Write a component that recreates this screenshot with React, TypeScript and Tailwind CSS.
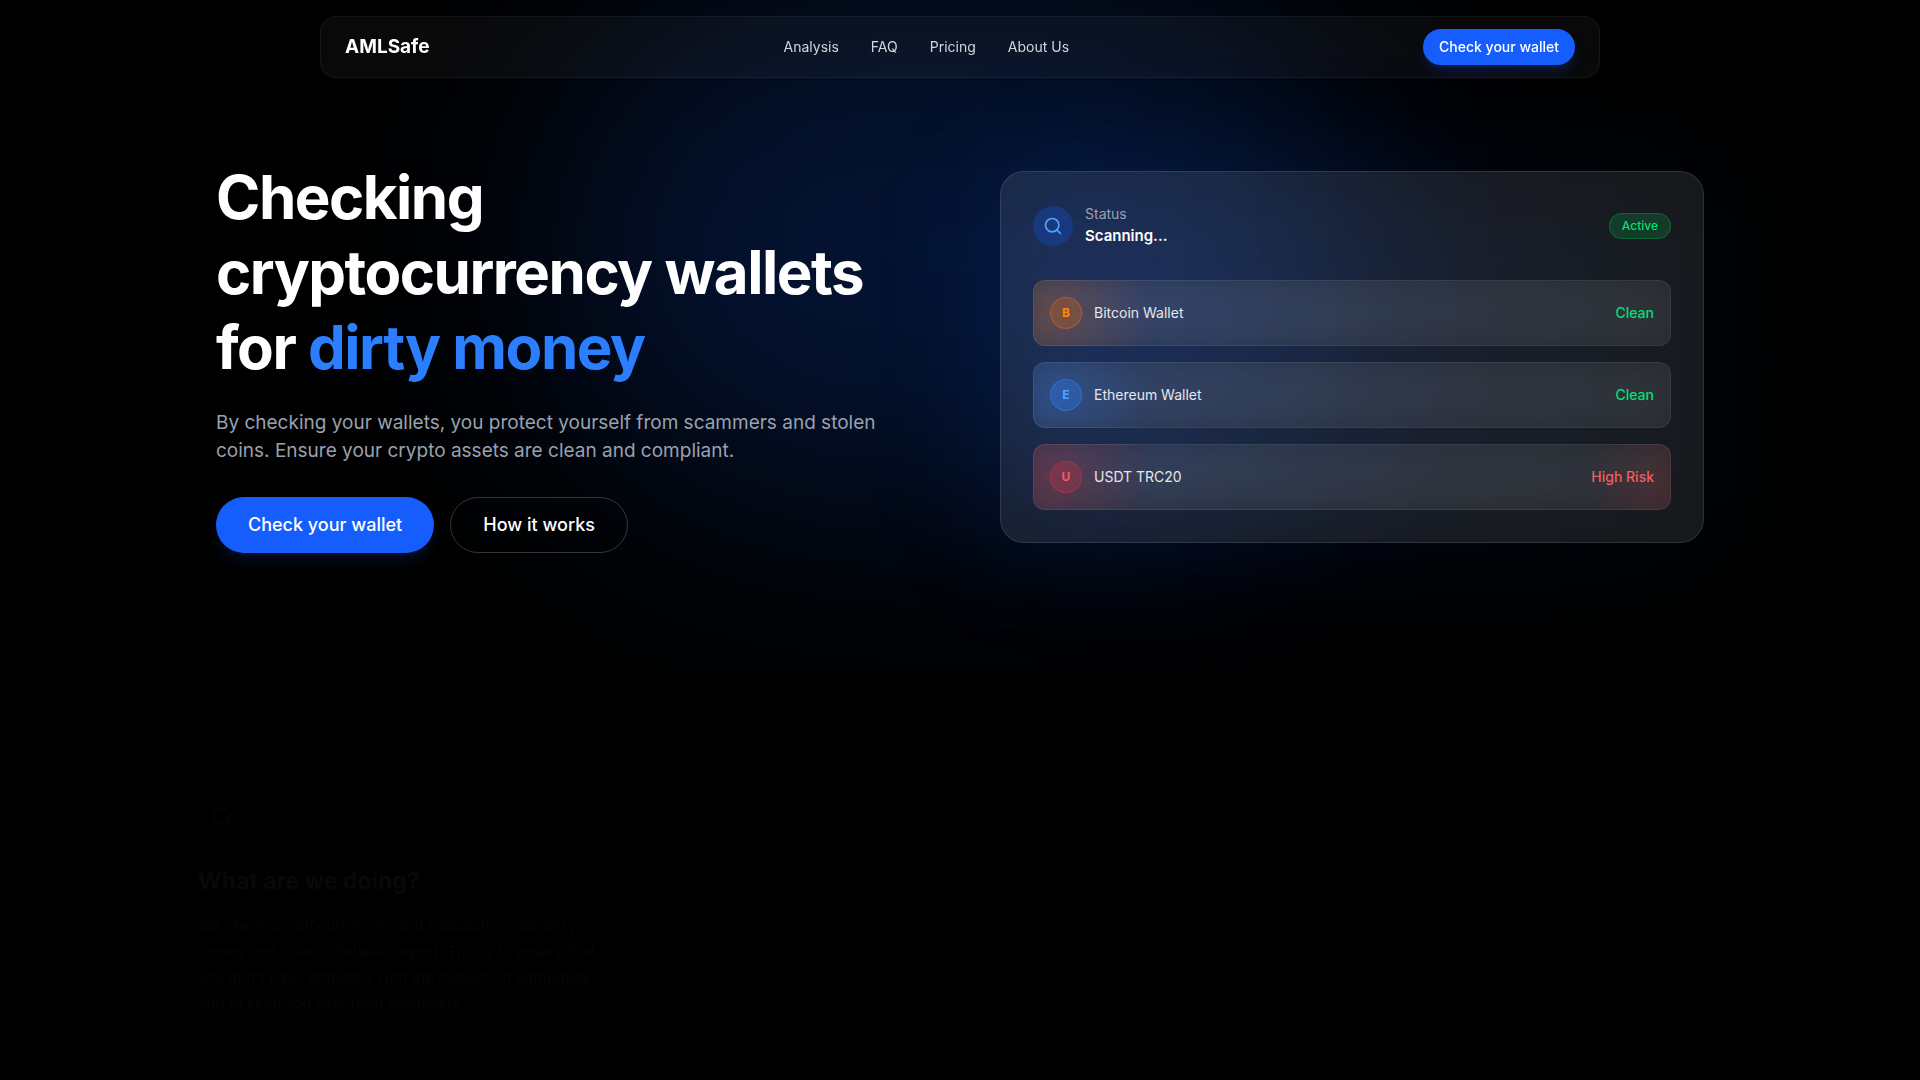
import { Search } from "lucide-react";

const navLinks = [
  { label: "Analysis", href: "#analysis" },
  { label: "FAQ", href: "#faq" },
  { label: "Pricing", href: "#pricing" },
  { label: "About Us", href: "#about" },
];

const wallets = [
  {
    letter: "B",
    name: "Bitcoin Wallet",
    status: "Clean",
    row: "bg-[radial-gradient(circle_at_12px_50%,rgba(255,105,0,0.22),transparent_110px)]",
    icon: "bg-orange-500/20 border-orange-500/40 text-[#ff8904]",
    text: "text-[#05df72]",
  },
  {
    letter: "E",
    name: "Ethereum Wallet",
    status: "Clean",
    row: "bg-[radial-gradient(circle_at_12px_50%,rgba(43,127,255,0.22),transparent_110px)]",
    icon: "bg-blue-500/30 border-blue-500/50 text-[#51a2ff]",
    text: "text-[#05df72]",
  },
  {
    letter: "U",
    name: "USDT TRC20",
    status: "High Risk",
    row: "bg-[radial-gradient(circle_at_12px_50%,rgba(251,44,54,0.22),transparent_110px),radial-gradient(circle_at_100%_60%,rgba(251,44,54,0.13),transparent_90px)]",
    icon: "bg-red-500/20 border-red-500/40 text-[#f05d62]",
    text: "text-[#f05d62]",
  },
];

function Header() {
  return (
    <header className="fixed inset-x-0 top-4 z-20 px-4">
      <div className="mx-auto flex max-w-7xl items-center justify-between rounded-2xl border border-white/5 bg-white/[0.035] px-6 py-3">
        <a href="#top" className="text-[19px] font-bold">
          AMLSafe
        </a>
        <nav className="flex gap-8 text-sm text-gray-300">
          {navLinks.map((link) => (
            <a key={link.label} href={link.href} className="hover:text-white transition-colors">
              {link.label}
            </a>
          ))}
        </nav>
        <button className="h-9 rounded-full bg-[#155dfc] px-4 text-sm font-medium shadow-lg shadow-blue-600/20">
          Check your wallet
        </button>
      </div>
    </header>
  );
}

function ScanCard() {
  return (
    <div className="relative">
      <div className="absolute inset-0 rounded-3xl bg-gradient-to-r from-blue-600/15 to-blue-600/5 blur-[60px]" />
      <div className="relative rounded-3xl border border-white/10 bg-white/[0.09] p-8">
        <div className="mb-8 flex items-center justify-between">
          <div className="flex items-center gap-3">
            <div className="flex size-10 items-center justify-center rounded-full bg-blue-600/25 text-[#51a2ff]">
              <Search size={20} />
            </div>
            <div>
              <p className="text-sm text-gray-400">Status</p>
              <p className="text-[15px] leading-6 font-semibold">Scanning...</p>
            </div>
          </div>
          <span className="rounded-full border border-green-500/30 bg-green-500/20 px-3 py-1 text-xs font-medium text-[#05df72]">
            Active
          </span>
        </div>

        <ul className="space-y-4">
          {wallets.map((wallet) => (
            <li key={wallet.letter} className="rounded-xl bg-white/10">
              <div
                className={`flex items-center justify-between rounded-xl border border-white/5 bg-origin-border p-4 text-sm shadow-[inset_0_0_20px_rgba(0,0,0,0.16)] ${wallet.row}`}
              >
                <div className="flex items-center gap-3">
                  <span
                    className={`flex size-8 items-center justify-center rounded-full border text-xs font-bold ${wallet.icon}`}
                  >
                    {wallet.letter}
                  </span>
                  <span className="text-gray-200">{wallet.name}</span>
                </div>
                <span className={`font-medium ${wallet.text}`}>{wallet.status}</span>
              </div>
            </li>
          ))}
        </ul>
      </div>
    </div>
  );
}

export default function App() {
  return (
    <div
      id="top"
      className="min-h-screen overflow-hidden bg-black text-white font-[Inter,'Liberation_Sans',sans-serif]"
    >
      <Header />

      <section className="relative overflow-hidden pt-40 pb-32">
        {/* background glow */}
        <div className="absolute top-0 left-1/2 h-[500px] w-[800px] -translate-x-1/2 rounded-full bg-[#155dfc]/20 blur-[120px]" />

        <div className="relative mx-auto grid max-w-[1536px] grid-cols-2 items-center gap-20 px-6">
          <div>
            <h1 className="text-6xl leading-tight font-bold tracking-tight">
              Checking cryptocurrency wallets for <span className="text-[#2b7fff]">dirty money</span>
            </h1>
            <p className="mt-6 text-[19px] leading-7 text-gray-400">
              By checking your wallets, you protect yourself from scammers and stolen coins. Ensure your crypto
              assets are clean and compliant.
            </p>
            <div className="mt-8 flex gap-4 text-lg font-medium">
              <button className="h-14 rounded-full bg-[#155dfc] px-8 shadow-lg shadow-blue-600/15">
                Check your wallet
              </button>
              <button className="h-14 rounded-full border border-white/20 px-8">How it works</button>
            </div>
          </div>
          <ScanCard />
        </div>
      </section>

      <section id="analysis" className="mx-auto max-w-[1536px] px-1.5 pt-28 opacity-[0.03]">
        <div className="max-w-[410px]">
          <div className="mb-6 flex size-12 items-center justify-center rounded-xl text-[#2b7fff]">
            <Search size={24} />
          </div>
          <h2 className="mb-4 text-[23px] leading-8 font-bold">What are we doing?</h2>
          <p className="text-[15px] leading-[26px] text-gray-400">
            We check cryptocurrencies and transactions for dirty money and issue a detailed report. This is to
            ensure that you don't have problems with the inspection authorities and to keep you safe from
            scammers.
          </p>
        </div>
      </section>
    </div>
  );
}
